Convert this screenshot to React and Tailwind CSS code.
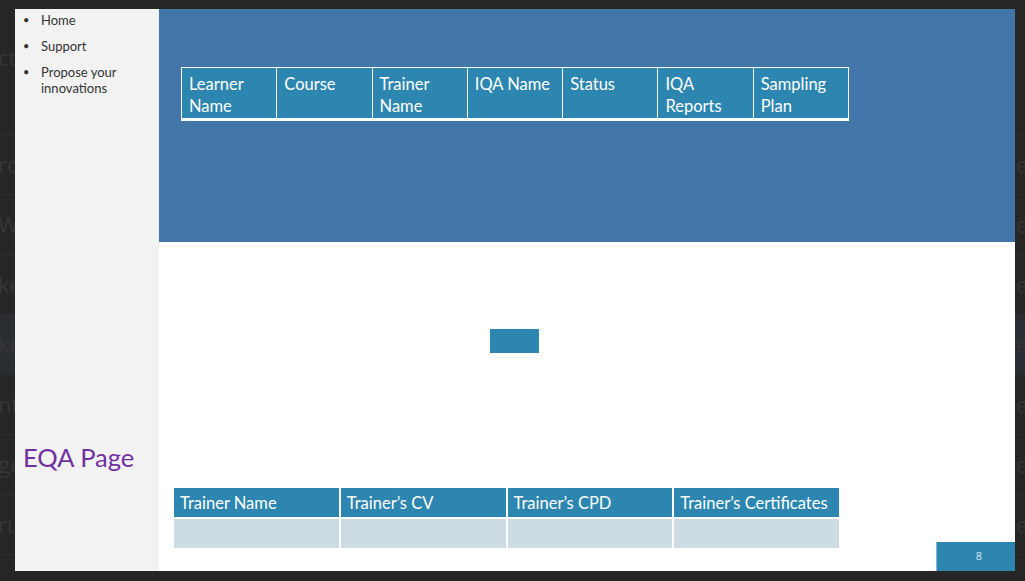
import React from "react";

const bgRows = [
  { l: "ro", r: "e" },
  { l: "Wo", r: "e" },
  { l: "ke", r: "e" },
  { l: "ke", r: "e", hl: true },
  { l: "nta", r: "e" },
  { l: "ge", r: "e" },
  { l: "ru", r: "e" },
  { l: "", r: "" },
];

const topHeaders = [
  ["Learner", "Name"],
  ["Course"],
  ["Trainer", "Name"],
  ["IQA Name"],
  ["Status"],
  ["IQA", "Reports"],
  ["Sampling", "Plan"],
];

const bottomHeaders = ["Trainer Name", "Trainer’s CV", "Trainer’s CPD", "Trainer’s Certificates"];

export default function App() {
  const slideFont = { fontFamily: "Lato, 'Open Sans', sans-serif" };
  return (
    <div className="relative w-[1025px] h-[581px] overflow-hidden bg-[#262626]">
      {/* background page behind slide */}
      <div className="flex flex-col text-[22px] text-[#363636]" style={{ fontFamily: "'Open Sans', sans-serif" }}>
        <div className="h-[135px] flex items-center border-b border-[#2e2e2e]">
          <span className="-ml-[2px] mt-[-20px]">ct</span>
        </div>
        {bgRows.map((r, i) => (
          <div
            key={i}
            className={`h-[60px] flex items-center justify-between border-b border-[#2e2e2e] ${r.hl ? "bg-[#2a2d32]" : ""}`}
          >
            <span className="-ml-[2px]">{r.l}</span>
            <span className="-mr-[3px]">{r.r}</span>
          </div>
        ))}
      </div>

      {/* slide */}
      <div className="absolute left-[15px] top-[9px] w-[1000px] h-[562px] flex bg-white" style={slideFont}>
        {/* sidebar */}
        <div className="w-[144px] bg-[#f2f2f2] flex flex-col pt-[3px]">
          <ul className="flex flex-col gap-[10px] text-[13px] leading-[16px] text-[#333]">
            {[["Home"], ["Support"], ["Propose your", "innovations"]].map((item, i) => (
              <li key={i} className="flex">
                <span className="w-[26px] pl-[8px] text-[11px]">•</span>
                <span>
                  {item.map((t, j) => (
                    <div key={j}>{t}</div>
                  ))}
                </span>
              </li>
            ))}
          </ul>
          <div className="mt-[345px] ml-[8px] text-[25.5px] leading-[32px] text-[#7030a0]">EQA Page</div>
        </div>

        {/* main */}
        <div className="flex-1 flex flex-col">
          <div className="h-[233px] bg-[#4275a8] pt-[58px] pl-[22px]">
            <div className="w-[668px] grid grid-cols-7 gap-x-[1px] bg-white p-[1px] pb-[3px]">
              {topHeaders.map((h, i) => (
                <div key={i} className="h-[50px] bg-[#2d86b0] text-white text-[16.5px] leading-[22px] pl-[7px] pt-[5px]">
                  {h.map((t, j) => (
                    <div key={j} className="whitespace-nowrap">{t}</div>
                  ))}
                </div>
              ))}
            </div>
          </div>

          <div className="flex-1 flex flex-col">
            <div className="mt-[87px] ml-[331px] w-[49px] h-[24px] bg-[#2d86b0]" />
            <div className="mt-[135px] flex justify-between items-end">
              <div className="ml-[15px] mb-[23px] w-[665px] grid grid-cols-4 gap-x-[2px] gap-y-[2px] bg-white">
                {bottomHeaders.map((h, i) => (
                  <div key={i} className="h-[29px] bg-[#2d86b0] text-white text-[16.5px] leading-[30px] pl-[6px] whitespace-nowrap">
                    {h}
                  </div>
                ))}
                {bottomHeaders.map((_, i) => (
                  <div key={"d" + i} className="h-[29px] bg-[#cddbe4]" />
                ))}
              </div>
              <div className="w-[79px] h-[29px] bg-[#2d86b0] border-l border-[#7fb6d3] flex items-center justify-center pl-[6px] text-[11px] text-[#d6e8f2]" style={{ fontFamily: "'Open Sans', sans-serif" }}>
                8
              </div>
            </div>
          </div>
        </div>
      </div>
    </div>
  );
}
